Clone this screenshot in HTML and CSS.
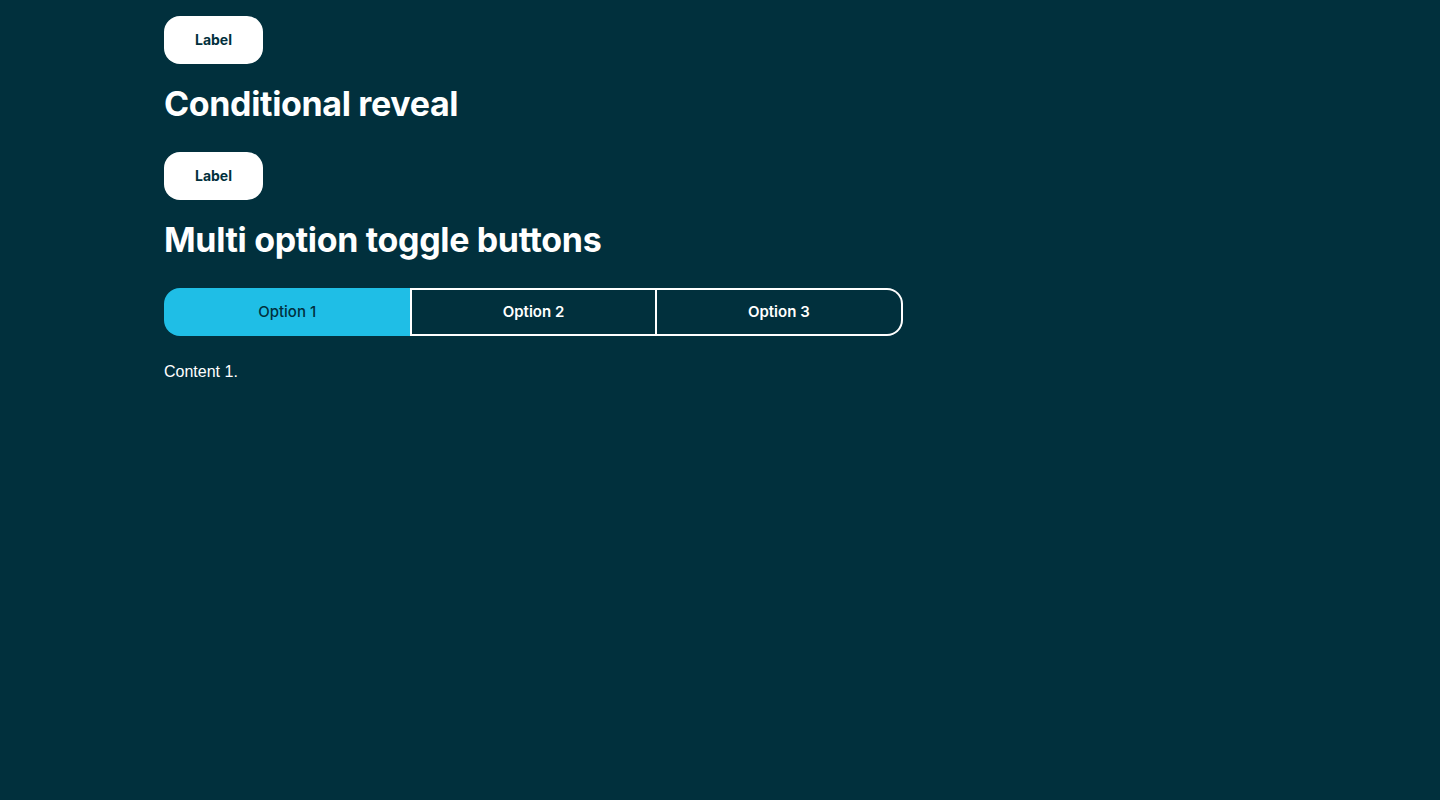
FILE: index.html
```html
<!DOCTYPE html>
<html lang="en">
<head>
<meta charset="utf-8">
<title>Toggle buttons</title>
<link rel="stylesheet" href="styles.css">
</head>
<body>
<main class="page">
  <button class="label-btn" type="button">Label</button>
  <h2 class="heading">Conditional reveal</h2>
  <button class="label-btn" type="button">Label</button>
  <h2 class="heading">Multi option toggle buttons</h2>
  <div class="toggle-group" role="tablist">
    <button class="toggle toggle-active" type="button">Option 1</button>
    <button class="toggle" type="button">Option 2</button>
    <button class="toggle toggle-last" type="button">Option 3</button>
  </div>
  <p class="content">Content 1.</p>
</main>
</body>
</html>
```
FILE: styles.css
```css
html, body {
  margin: 0;
  padding: 0;
  background: #01303d;
  height: 100%;
}
.page {
  padding: 16px 164px;
  display: flex;
  flex-direction: column;
  align-items: flex-start;
  font-family: Inter, "Noto Sans", sans-serif;
  color: #ffffff;
}
.label-btn {
  width: 99px;
  height: 48px;
  border: none;
  border-radius: 16px;
  background: #ffffff;
  color: #01303d;
  font-family: Inter, sans-serif;
  font-weight: 700;
  font-size: 14px;
  line-height: 47px;
  padding: 0 0 1px;
  cursor: pointer;
}
.heading {
  margin: 20px 0 28px;
  font-size: 34px;
  line-height: 40px;
  font-weight: 700;
  letter-spacing: -0.35px;
}
.toggle-group {
  display: flex;
  width: 739px;
  height: 48px;
}
.toggle {
  flex: 0 0 33.3333%;
  box-sizing: border-box;
  height: 48px;
  border: 2px solid #ffffff;
  border-left: none;
  background: transparent;
  color: #ffffff;
  font-family: Inter, sans-serif;
  font-weight: 600;
  font-size: 15px;
  padding: 0 0 1px;
  cursor: pointer;
}
.toggle-active {
  background: #1fbee6;
  color: #01303d;
  border: none;
  border-radius: 16px 0 0 16px;
  font-weight: 500;
}
.toggle-active + .toggle {
  border-left: 2px solid #ffffff;
}
.toggle-last {
  border-radius: 0 16px 16px 0;
}
.content {
  margin: 27px 0 0;
  font-family: "Liberation Sans", Arial, sans-serif;
  font-size: 16px;
  line-height: 18px;
}
```
